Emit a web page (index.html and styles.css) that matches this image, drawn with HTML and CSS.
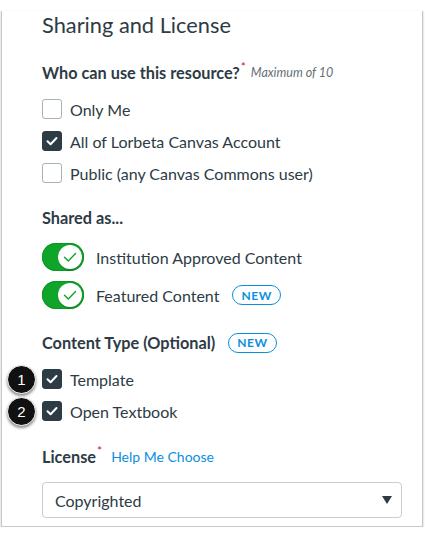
FILE: index.html
```html
<!DOCTYPE html>
<html>
<head>
<meta charset="utf-8">
<link rel="stylesheet" href="styles.css">
</head>
<body>
<div class="card">
  <h2 class="title">Sharing and License</h2>

  <div class="label label-first">Who can use this resource?<span class="req">*</span><span class="hint">Maximum of 10</span></div>
  <div class="list">
    <div class="row"><span class="cb"></span><span class="txt">Only Me</span></div>
    <div class="row"><span class="cb checked"><svg viewBox="0 0 20 20" width="20" height="20"><path d="M5.5 10.2 L8.6 13.2 L14.5 7" fill="none" stroke="#fff" stroke-width="2" stroke-linecap="round" stroke-linejoin="round"/></svg></span><span class="txt">All of Lorbeta Canvas Account</span></div>
    <div class="row"><span class="cb"></span><span class="txt">Public (any Canvas Commons user)</span></div>
  </div>

  <div class="label">Shared as...</div>
  <div class="list">
    <div class="trow"><span class="toggle"><span class="knob"><svg viewBox="0 0 24 24" width="24" height="24"><path d="M6.5 12.3 L10.3 16 L17.5 8.5" fill="none" stroke="#0fa52b" stroke-width="1.4" stroke-linecap="round" stroke-linejoin="round"/></svg></span></span><span class="txt">Institution Approved Content</span></div>
    <div class="trow"><span class="toggle"><span class="knob"><svg viewBox="0 0 24 24" width="24" height="24"><path d="M6.5 12.3 L10.3 16 L17.5 8.5" fill="none" stroke="#0fa52b" stroke-width="1.4" stroke-linecap="round" stroke-linejoin="round"/></svg></span></span><span class="txt">Featured Content</span><span class="badge">NEW</span></div>
  </div>

  <div class="label">Content Type (Optional)<span class="badge badge-label">NEW</span></div>
  <div class="list">
    <div class="row"><span class="num">1</span><span class="cb checked"><svg viewBox="0 0 20 20" width="20" height="20"><path d="M5.5 10.2 L8.6 13.2 L14.5 7" fill="none" stroke="#fff" stroke-width="2" stroke-linecap="round" stroke-linejoin="round"/></svg></span><span class="txt">Template</span></div>
    <div class="row"><span class="num">2</span><span class="cb checked"><svg viewBox="0 0 20 20" width="20" height="20"><path d="M5.5 10.2 L8.6 13.2 L14.5 7" fill="none" stroke="#fff" stroke-width="2" stroke-linecap="round" stroke-linejoin="round"/></svg></span><span class="txt">Open Textbook</span></div>
  </div>

  <div class="label label-license">License<span class="req">*</span><a class="link">Help Me Choose</a></div>
  <div class="select"><span>Copyrighted</span><svg class="caret" viewBox="0 0 10 8" width="10" height="8"><path d="M0 0 L10 0 L5 8 Z" fill="#2d3b45"/></svg></div>
</div>
</body>
</html>
```

FILE: styles.css
```css
html, body {
  margin: 0;
  padding: 0;
  background: #fff;
}
body {
  font-family: Lato, "Noto Sans", sans-serif;
  color: #2d3b45;
}
.card {
  margin-left: 1px;
  width: 422px;
  border: 1px solid #c3c9cd;
  border-top: none;
  box-shadow: 0 1px 2px rgba(0,0,0,0.25);
  padding: 0 0 8px 40px;
  box-sizing: border-box;
}
.title {
  margin: 11px 0 0;
  font-size: 21.8px;
  line-height: 28px;
  font-weight: 400;
}
.label {
  display: flex;
  align-items: center;
  margin-top: 19px;
  font-size: 16.3px;
  line-height: 20px;
  font-weight: 700;
  height: 20px;
}
.label-first { margin-top: 24px; }
.label-license { margin-top: 20px; }
.req {
  color: #e0061f;
  font-size: 12px;
  font-weight: 400;
  align-self: flex-start;
  line-height: 10px;
  margin-left: 1px;
  margin-top: -1px;
}
.hint {
  font-size: 12.5px;
  font-weight: 400;
  font-style: italic;
  color: #666f75;
  margin-left: 5px;
}
.list { margin-top: 10px; }
.row {
  position: relative;
  display: flex;
  align-items: center;
  height: 32px;
}
.cb {
  width: 20px;
  height: 20px;
  box-sizing: border-box;
  border: 1px solid #a8b1b7;
  border-radius: 3px;
  background: #fff;
  display: flex;
}
.cb.checked {
  background: #2d3b45;
  border-color: #2d3b45;
}
.cb svg { margin: -1px; }
.txt {
  font-size: 16px;
  margin-left: 8px;
}
.trow {
  display: flex;
  align-items: center;
  height: 38px;
}
.trow .txt { margin-left: 12px; }
.toggle {
  width: 42px;
  height: 28px;
  border-radius: 14px;
  background: #0fa52b;
  box-sizing: border-box;
  display: flex;
  align-items: center;
  justify-content: flex-end;
  padding-right: 2px;
  box-shadow: inset 0 0 0 1px #0b9425;
}
.knob {
  width: 24px;
  height: 24px;
  border-radius: 50%;
  background: #fff;
  display: flex;
  box-shadow: 0 1px 1px rgba(0,0,0,0.2);
}
.badge {
  display: inline-flex;
  align-items: center;
  justify-content: center;
  height: 20px;
  box-sizing: border-box;
  padding: 0 8px;
  border: 1px solid #0b8fe0;
  border-radius: 10px;
  color: #0b8fe0;
  font-size: 12px;
  font-weight: 700;
  letter-spacing: 0.6px;
  margin-left: 13px;
}
.badge-label { margin-left: 13px; }
.num {
  position: absolute;
  left: -35px;
  top: 2px;
  width: 29px;
  height: 29px;
  border-radius: 50%;
  background: #111;
  color: #fff;
  font-family: "Liberation Sans", Arial, sans-serif;
  font-size: 15px;
  display: flex;
  align-items: center;
  justify-content: center;
  box-shadow: 0 2px 3px rgba(0,0,0,0.45);
  border: 1px solid #fff;
  box-sizing: border-box;
}
.link {
  color: #0b8fe0;
  font-size: 14px;
  font-weight: 400;
  margin-left: 9px;
}
.select {
  margin-top: 15px;
  width: 360px;
  height: 36px;
  box-sizing: border-box;
  border: 1px solid #c7cdd1;
  border-radius: 4px;
  display: flex;
  align-items: center;
  justify-content: space-between;
  padding: 0 9px 0 12px;
  font-size: 16px;
}
```
